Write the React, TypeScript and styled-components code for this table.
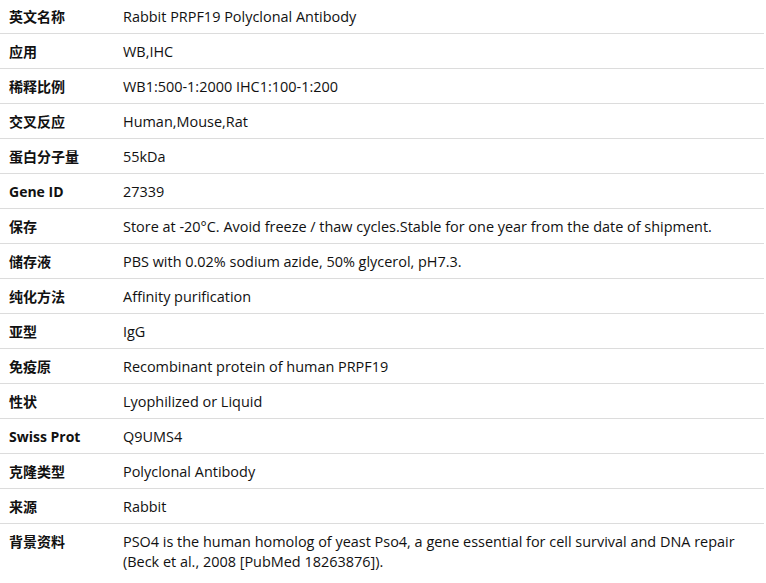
import React from "react";
import styled, { createGlobalStyle } from "styled-components";

const Global = createGlobalStyle`
  html, body { margin: 0; padding: 0; background: #fff; }
  body { font-family: "Open Sans", "Noto Sans CJK SC", sans-serif; color: #111; }
`;

const Table = styled.div`
  width: 764px;
  display: flex;
  flex-direction: column;
  margin-top: -1px;
`;

const Row = styled.div`
  display: grid;
  grid-template-columns: 114px 1fr;
  border-bottom: 1px solid #dcdcdc;
  &:last-child { border-bottom: none; }
`;

const Label = styled.div`
  padding: 8px 9px 6px;
  font-size: 14px;
  line-height: 20px;
  font-weight: 700;
  font-family: "Open Sans", "Noto Sans CJK SC", sans-serif;
`;

const Value = styled.div`
  padding: 8px 9px 6px;
  font-size: 14.45px;
  line-height: 20px;
  font-family: "Open Sans", "Noto Sans CJK SC", sans-serif;
`;

const rows: [string, string][] = [
  ["英文名称", "Rabbit PRPF19 Polyclonal Antibody"],
  ["应用", "WB,IHC"],
  ["稀释比例", "WB1:500-1:2000 IHC1:100-1:200"],
  ["交叉反应", "Human,Mouse,Rat"],
  ["蛋白分子量", "55kDa"],
  ["Gene ID", "27339"],
  ["保存", "Store at -20°C. Avoid freeze / thaw cycles.Stable for one year from the date of shipment."],
  ["储存液", "PBS with 0.02% sodium azide, 50% glycerol, pH7.3."],
  ["纯化方法", "Affinity purification"],
  ["亚型", "IgG"],
  ["免疫原", "Recombinant protein of human PRPF19"],
  ["性状", "Lyophilized or Liquid"],
  ["Swiss Prot", "Q9UMS4"],
  ["克隆类型", "Polyclonal Antibody"],
  ["来源", "Rabbit"],
  ["背景资料", "PSO4 is the human homolog of yeast Pso4, a gene essential for cell survival and DNA repair (Beck et al., 2008 [PubMed 18263876])."],
];

export default function App() {
  return (
    <>
      <Global />
      <Table>
        {rows.map(([k, v]) => (
          <Row key={k}>
            <Label>{k}</Label>
            <Value>{v}</Value>
          </Row>
        ))}
      </Table>
    </>
  );
}
